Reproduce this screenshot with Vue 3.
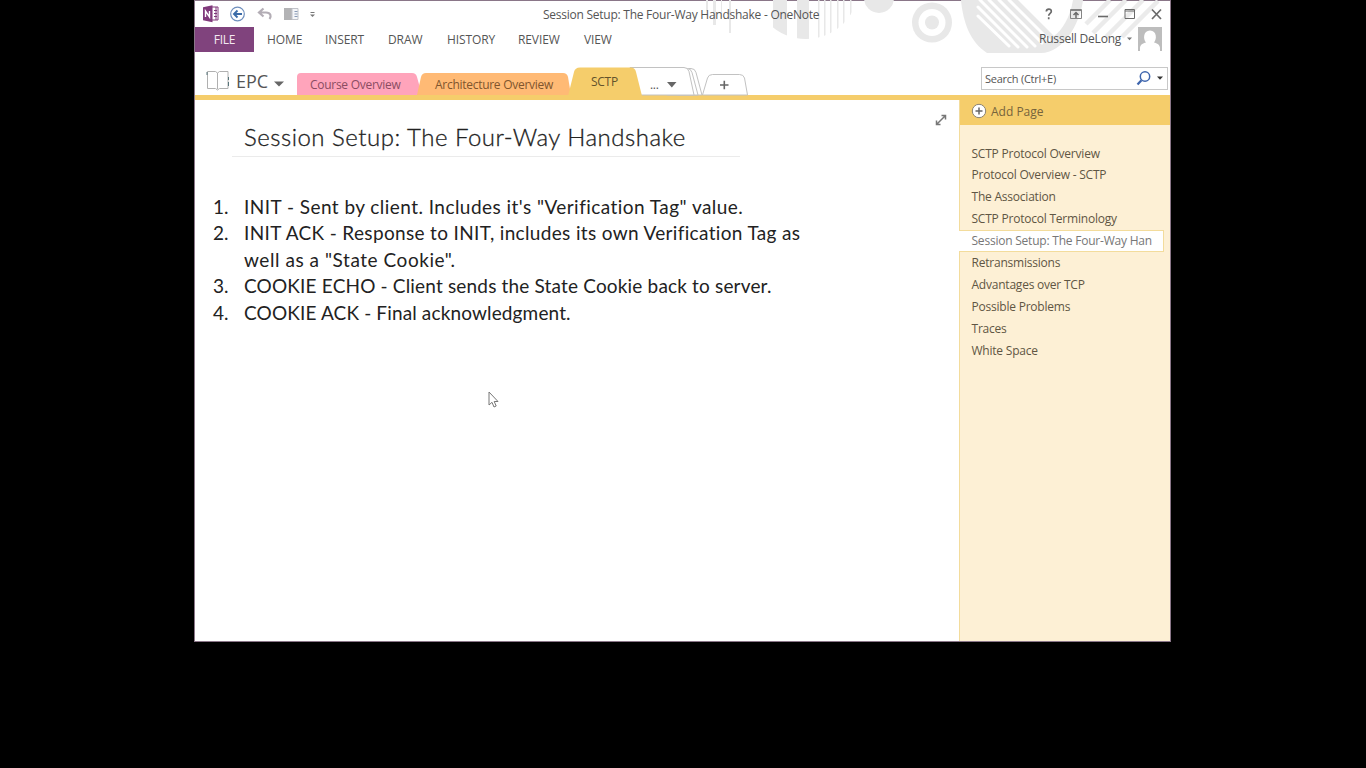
<script setup>
const menus = [
  { name: 'HOME', cls: 'm-home' },
  { name: 'INSERT', cls: 'm-insert' },
  { name: 'DRAW', cls: 'm-draw' },
  { name: 'HISTORY', cls: 'm-history' },
  { name: 'REVIEW', cls: 'm-review' },
  { name: 'VIEW', cls: 'm-view' },
]
const pages = [
  'SCTP Protocol Overview',
  'Protocol Overview - SCTP',
  'The Association',
  'SCTP Protocol Terminology',
  'Session Setup: The Four-Way Han',
  'Retransmissions',
  'Advantages over TCP',
  'Possible Problems',
  'Traces',
  'White Space',
]
const current = 4
</script>

<template>
  <div class="screen">
    <div class="window">
      <svg class="decor" width="500" height="56" viewBox="670 0 500 56">
        <defs>
          <clipPath id="stripeCircle"><circle cx="806" cy="-14" r="53" /></clipPath>
        </defs>
        <g fill="#e8e8e8">
          <g clip-path="url(#stripeCircle)">
            <rect x="773" y="0" width="14" height="40" />
            <rect x="797" y="0" width="12" height="40" />
            <rect x="818" y="0" width="1.500" height="40" />
            <rect x="824" y="0" width="1.500" height="40" />
            <rect x="830" y="0" width="1.500" height="40" />
            <rect x="837" y="0" width="1.500" height="40" />
            <rect x="843" y="0" width="1.500" height="40" />
            <rect x="850" y="0" width="1.500" height="40" />
          </g>
          <rect x="706" y="0" width="2" height="11" />
          <rect x="713" y="0" width="3" height="25" />
          <rect x="721" y="0" width="1" height="18" />
          <rect x="729" y="0" width="2" height="33" />
          <circle cx="879" cy="-2" r="15" />
          <circle cx="932" cy="22.500" r="20" />
          <circle cx="932" cy="22.500" r="13.500" fill="#fff" />
          <circle cx="932" cy="22.500" r="7" />
          <path d="M961 0H1083C1080 25 1062 53 1041 53H987C970 42 963 22 961 0Z" />
        </g>
        <path d="M1018 0H1073C1070 18 1062 30 1054 36Z" fill="#fff" />
        <path d="M978 16L1009 46M978 7L1018 47M980 0L1027 47M989 0L1035 46M999 0L1042 43M1009 0L1049 40" stroke="#fff" stroke-width="3" stroke-linecap="round" />
        <g stroke="#ebebeb" stroke-width="4.500">
          <path d="M1086 24L1110 0M1093 33L1126 0M1106 37L1143 0M1122 37L1158 1" />
        </g>
      </svg>

      <header class="titlebar">
        <svg class="qat" width="130" height="26" viewBox="195 1 130 26">
          <path d="M211 7h7v13h-7z" fill="#fff" stroke="#80397b" />
          <path d="M214 10.500h3M214 13.500h3M214 16.500h3M216 7v13" stroke="#80397b" />
          <path d="M203 7.200l9.500-2v17l-9.500-2z" fill="#80397b" />
          <path d="M205.500 17v-6l4 6v-6" fill="none" stroke="#fff" stroke-width="1.400" />
          <circle cx="237.500" cy="14" r="6.800" fill="#fff" stroke="#6f8fbd" stroke-width="1.200" />
          <path d="M242 14h-8M237.500 10.500l-3.500 3.500 3.500 3.500" fill="none" stroke="#3c6ca8" stroke-width="1.900" />
          <path d="M263.500 8.500l-4.500 4 4.500 4M259.500 12.500h6.500c5 0 5.500 4 3.500 6.500" fill="none" stroke="#b3adb5" stroke-width="2.200" />
          <path d="M284 8h8v12h-8z" fill="#b3b3b5" />
          <path d="M292 8.500h6v11h-6z" fill="#f4f5f8" stroke="#c0c2c8" />
          <path d="M294.500 11.500h3M294.500 14h3M294.500 16.500h3" stroke="#8799b5" />
          <path d="M310.500 12.500h4" stroke="#777" />
          <path d="M310 14.500h5l-2.500 2.500z" fill="#777" />
        </svg>
        <div class="caption">Session Setup: The Four-Way Handshake - OneNote</div>
        <svg class="controls" width="130" height="26" viewBox="1040 1 130 26" fill="none" stroke="#6a6a6a">
          <path d="M1046.300 11.500c.2-3.300 5.200-3.100 5 0c0 1.900-2.600 1.800-2.600 4.300M1048.700 17.300v1.900" stroke-width="1.700" />
          <path d="M1070.500 9.500h11v9h-11zM1070.500 10.500h11" stroke="#858585" />
          <path d="M1076 18v-5.500M1073.500 15l2.500-2.500 2.500 2.500" stroke-width="1.500" />
          <path d="M1098 16.500h10" stroke-width="1.600" />
          <path d="M1125 9.500h9.500v9h-9.500zM1125 11h9.500" />
          <path d="M1152 9.500l9 9.500M1161 9.500l-9 9.500" stroke-width="1.700" />
        </svg>
      </header>

      <div class="ribbon">
        <div class="file"><span>FILE</span></div>
        <nav class="menus">
          <span v-for="m in menus" :key="m.name" :class="m.cls">{{ m.name }}</span>
        </nav>
        <div class="account">
          <span class="user">Russell DeLong</span>
          <svg width="39" height="25" viewBox="1127 27 39 25">
            <path d="M1127 37.500h5l-2.500 2.700z" fill="#777" />
            <path d="M1138 27h24v24h-24z" fill="#bdbdbd" />
            <path d="M1140 51v-3c0-3 3-5 6-5.500-3-3-3-12 4-12s7 9 4 12c3 .5 6 2.500 6 5.500v3z" fill="#fff" />
          </svg>
        </div>
      </div>

      <div class="tabrow">
        <div class="notebook">
          <svg width="24" height="22" viewBox="206 70 24 22" fill="none" stroke="#8c8c8c">
            <path d="M207.500 71.500h8l2 1.500 2-1.500h8.500v17h-8.500l-2 1.500-2-1.500h-8zM217.500 73v16" stroke="#b0b0b0" />
            <path d="M207 72v3M228.500 77v3M228.500 82v4" stroke="#57747a" />
          </svg>
          <span class="nbname">EPC</span>
          <svg class="nbarrow" width="10" height="6" viewBox="0 0 10 6"><path d="M0 .5h10L5 5.500z" fill="#666" /></svg>
        </div>
        <div class="tabs">
          <svg class="tabshapes" width="460" height="30" viewBox="296 66 460 30">
            <path d="M297 95V77q0-4 4-4h111q4 0 5 4l5 18z" fill="#ffa4bb" />
            <path d="M417 95l4-18q1-4 5-4h137q4 0 5 4l3 18z" fill="#ffba75" />
            <g fill="#fff" stroke="#c2c2c2">
              <path d="M677 95V68.500h14q4 0 5 4l6 22.500z" />
              <path d="M667 95V68.500h20q4 0 5 4l6 22.500z" />
              <path d="M630 95V67.500h54q4 0 5 4l5 23.500z" />
              <path d="M702.500 95l5-17q1-3.500 5-3.500h27q4 0 5 3.500l3 17z" />
            </g>
            <path d="M568 96l6-24q1-4.500 6-4.500h51q4 0 5 4.500l6 24z" fill="#f5cd6b" />
            <path d="M667 82h9.500l-4.700 5.500z" fill="#666" />
            <path d="M720 85h8.500M724.300 80.700v8.600" stroke="#666" stroke-width="1.600" />
          </svg>
          <span class="t-course">Course Overview</span>
          <span class="t-arch">Architecture Overview</span>
          <span class="t-sctp">SCTP</span>
          <span class="t-more">...</span>
        </div>
        <div class="search">
          <span>Search (Ctrl+E)</span>
          <svg width="32" height="20" viewBox="1133 69 32 20">
            <circle cx="1144" cy="77.500" r="4.700" fill="none" stroke="#3e65ad" stroke-width="1.500" />
            <path d="M1140.500 81.200l-4 4.300" stroke="#3e65ad" stroke-width="2.300" />
            <path d="M1156 77.500h6l-3 3.300z" fill="#333" />
          </svg>
        </div>
      </div>

      <div class="accent"></div>
      <div class="body">
        <main class="page">
          <h1>Session Setup: The Four-Way Handshake</h1>
          <ol>
            <li><b>1.</b><span class="l1">INIT - Sent by client. Includes it's "Verification Tag" value.</span></li>
            <li><b>2.</b><span class="l2">INIT ACK - Response to INIT, includes its own Verification Tag as<br /><i>well as a "State Cookie".</i></span></li>
            <li><b>3.</b><span class="l3">COOKIE ECHO - Client sends the State Cookie back to server.</span></li>
            <li><b>4.</b><span class="l4">COOKIE ACK - Final acknowledgment.</span></li>
          </ol>
          <svg class="expand" width="12" height="12" viewBox="0 0 12 12" fill="none" stroke="#777" stroke-width="1.500">
            <path d="M2 10L10 2M6.500 1.500H10.500V5.500M1.500 6.500V10.500H5.500" />
          </svg>
          <svg class="cursor" width="12" height="18" viewBox="0 0 12 18">
            <path d="M1 1v13l3-2.700 2 4.700 2.200-1-2-4.500H10z" fill="#fff" stroke="#777" />
          </svg>
        </main>
        <aside class="sidebar">
          <div class="add">
            <svg width="16" height="16" viewBox="0 0 16 16">
              <circle cx="8" cy="8" r="6.700" fill="#fff" stroke="#8a8271" />
              <path d="M4.500 8h7M8 4.500v7" stroke="#666" stroke-width="1.500" />
            </svg>
            <span>Add Page</span>
          </div>
          <ul>
            <li v-for="(p, i) in pages" :key="p" :class="{ current: i === current }">{{ p }}</li>
          </ul>
        </aside>
      </div>
    </div>
  </div>
</template>

<style>
body { background: #000; }
</style>

<style scoped>
.screen {
  width: 1366px;
  height: 768px;
  background: #000;
  overflow: hidden;
  font-family: "Open Sans", "Noto Sans", sans-serif;
  font-size: 12px;
  color: #555;
}
.screen * { box-sizing: border-box; }
.screen span { white-space: nowrap; }
svg { display: block; flex: none; }
.window {
  position: relative;
  display: flex;
  flex-direction: column;
  width: 977px;
  height: 642px;
  margin-left: 194px;
  background: #fff;
  border: 1px solid #8a7688;
}
.decor { position: absolute; left: 475px; top: -1px; }
.titlebar, .ribbon, .tabrow { position: relative; display: flex; flex: none; }
.titlebar { height: 26px; }
.caption { flex: 1; padding-left: 218px; line-height: 27px; letter-spacing: -0.25px; white-space: nowrap; }
.ribbon { height: 25px; line-height: 25px; }
.file { width: 59px; background: #80437d; color: #f3e8f2; text-align: center; letter-spacing: -0.2px; }
.menus { display: flex; flex: 1; letter-spacing: -0.1px; }
.menus span { flex: none; }
.m-home { width: 58px; margin-left: 13px; }
.m-insert { width: 63px; }
.m-draw { width: 59px; }
.m-history { width: 71px; }
.m-review { width: 66px; }
.account { display: flex; padding-right: 4px; }
.user { width: 88px; line-height: 24px; letter-spacing: -0.2px; }
.tabrow { height: 43px; }
.notebook { display: flex; width: 101px; padding: 18px 0 0 11px; }
.nbname { width: 38px; margin-left: 6px; font-size: 18px; line-height: 23px; }
.nbarrow { margin-top: 11px; }
.tabs { position: relative; display: flex; width: 460px; padding-top: 14px; line-height: 37px; letter-spacing: -0.28px; }
.tabshapes { position: absolute; left: 0; top: 14px; }
.tabs span { position: relative; }
.t-course { width: 125px; margin-left: 14px; color: #8b4c62; }
.t-arch { width: 156px; color: #80552d; }
.t-sctp { width: 59px; line-height: 31px; color: #63522b; }
.search {
  display: flex;
  width: 187px;
  height: 23px;
  margin: 15px 0 0 225px;
  padding-left: 3px;
  border: 1px solid #c8c8c8;
  background: #fff;
  font-size: 11px;
  line-height: 21px;
  letter-spacing: -0.25px;
}
.search span { width: 149px; }
.accent { height: 5px; flex: none; background: #f5cd6b; }
.body { display: flex; flex: 1; min-height: 0; }
.page { position: relative; width: 764px; background: #fff; color: #222; font-family: Lato, sans-serif; }
h1 {
  width: 508px;
  height: 57px;
  margin: 0 0 0 37px;
  padding: 22px 0 0 12px;
  border-bottom: 1px solid #ebebeb;
  font-size: 24px;
  font-weight: 300;
  line-height: 30px;
  letter-spacing: 0.5px;
  -webkit-text-stroke: 0.3px #222;
  white-space: nowrap;
}
ol { margin: 37px 0 0 18px; padding: 0; list-style: none; font-size: 19px; line-height: 26.400px; font-variant-ligatures: none; }
ol li { display: flex; }
ol b { width: 31px; font-weight: 400; }
ol i { font-style: normal; letter-spacing: 0.55px; }
.l1 { letter-spacing: 0.45px; }
.l2 { letter-spacing: 0.34px; }
.l3 { letter-spacing: 0.17px; }
.l4 { letter-spacing: 0.14px; }
.expand { position: absolute; left: 740px; top: 14px; }
.cursor { position: absolute; left: 293px; top: 291px; }
.sidebar { width: 211px; background: #fdf0d5; border-left: 1px solid #f3dc9c; color: #5f5644; }
.add { display: flex; align-items: center; height: 25px; padding: 0 0 3px 11px; background: #f5cd6b; color: #75633c; }
.add span { margin-left: 4px; }
ul { margin: 17.500px 0 0; padding: 0; list-style: none; letter-spacing: -0.22px; }
ul li { height: 21.900px; padding-left: 11.500px; line-height: 21.900px; white-space: nowrap; }
ul .current { width: 205px; margin-left: -1px; padding-left: 12.500px; background: #fff; border: 1px solid #f3dc9c; border-left: 0; line-height: 19.900px; color: #777; }
</style>
